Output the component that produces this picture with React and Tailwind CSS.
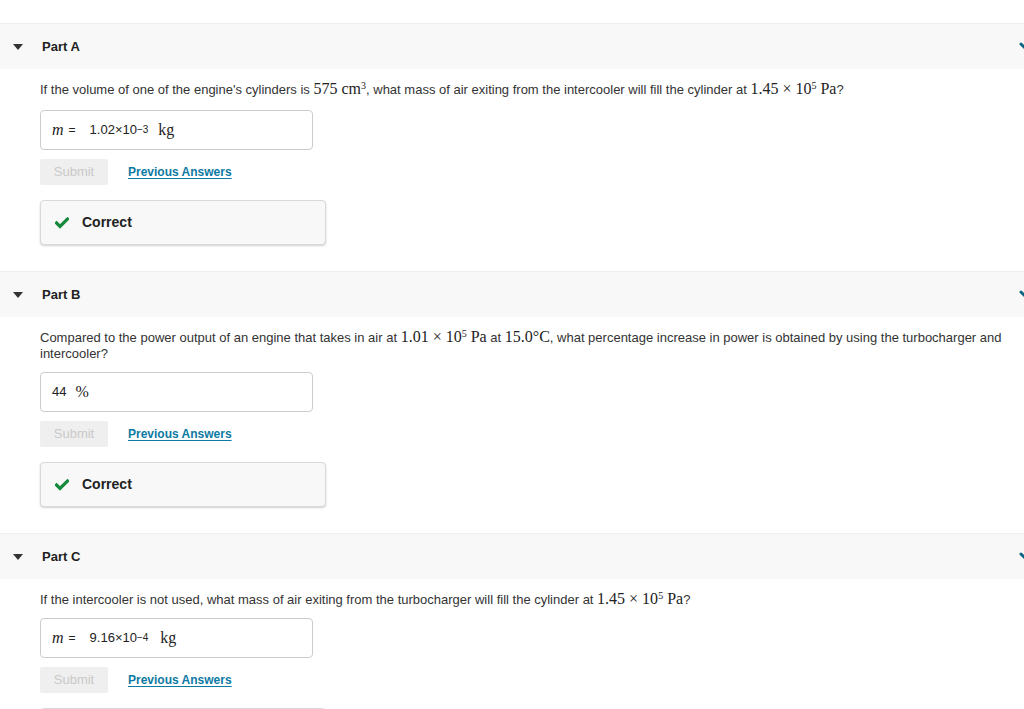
import React from "react";

const sans = { fontFamily: '"Liberation Sans", Arial, sans-serif' };
const serif = { fontFamily: '"Liberation Serif", "DejaVu Serif", serif' };

function Sup({ children }) {
  return <sup className="text-[10px] leading-[0]">{children}</sup>;
}

function M({ children }) {
  return (
    <span className="text-[16px] leading-[0] text-[#222]" style={serif}>
      {children}
    </span>
  );
}

function Header({ title }) {
  return (
    <div className="relative flex h-[46px] items-center bg-[#f8f8f8] border-t border-[#efefef]">
      <svg className="ml-[13px] h-[6px] w-[10px]" viewBox="0 0 10 6">
        <path d="M0 0 L10 0 L5 6 Z" fill="#333" />
      </svg>
      <span className="ml-[19px] text-[13px] font-bold text-[#222]">{title}</span>
      <svg
        className="absolute right-[-14px] top-[17px] h-[14px] w-[20px]"
        viewBox="0 0 20 14"
        fill="none"
      >
        <path d="M3 3 L10 10 L17 3" stroke="#0b6380" strokeWidth="3" strokeLinecap="round" />
      </svg>
    </div>
  );
}

function Check() {
  return (
    <svg className="h-[12px] w-[14px]" viewBox="0 0 14 12">
      <path d="M1.5 6 L5 9.5 L12.5 2" stroke="#158a3c" strokeWidth="3.2" fill="none" strokeLinecap="square" />
    </svg>
  );
}

function Controls() {
  return (
    <>
      <div className="mt-[9px] flex h-[26px] items-center">
        <div className="flex h-[26px] w-[68px] items-center justify-center rounded-[2px] bg-[#efefef] text-[13px] text-[#c9c9c9]">
          Submit
        </div>
        <span className="ml-[20px] text-[12px] leading-[14px] font-bold text-[#0c7aa3] underline decoration-[#0c7aa3] underline-offset-2">
          Previous Answers
        </span>
      </div>
      <div className="mt-[15px] flex h-[45px] w-[286px] items-center rounded-[4px] border border-[#d9d9d9] bg-[#f8f8f8] shadow-[0_1px_2px_rgba(0,0,0,0.18)]">
        <span className="ml-[14px] flex"><Check /></span>
        <span className="ml-[13px] text-[14px] font-bold text-[#222]">Correct</span>
      </div>
    </>
  );
}

function InputBox({ children, tight }) {
  return (
    <div
      className={
        (tight ? "mt-[10px] " : "mt-[12px] ") +
        "flex h-[40px] w-[273px] items-center rounded-[4px] border border-[#cccccc] bg-white pl-[11px]"
      }
    >
      {children}
    </div>
  );
}

function Part({ title, question, input, tight }) {
  return (
    <div>
      <Header title={title} />
      <div className="pl-[40px] pr-[10px] pt-[13px] pb-[26px]">
        <p className="text-[13px] leading-[16px] text-[#333]">{question}</p>
        <InputBox tight={tight}>{input}</InputBox>
        <Controls />
      </div>
    </div>
  );
}

function Sci({ mant, exp }) {
  return (
    <span className="text-[13px] text-[#222]">
      {mant}×10<sup className="relative top-[-1px] text-[10px]">{exp}</sup>
    </span>
  );
}

function MEq() {
  return (
    <span className="mr-[14px] flex items-center text-[#222]" style={serif}>
      <i className="text-[16px]">m</i>
      <span className="ml-[5px] text-[12px]" style={sans}>=</span>
    </span>
  );
}

export default function App() {
  return (
    <div className="h-[709px] w-full overflow-hidden bg-white pt-[23px]" style={sans}>
      <Part
        title="Part A"
        question={
          <>
            If the volume of one of the engine's cylinders is <M>575 cm<Sup>3</Sup></M>, what mass of air exiting from the intercooler will fill the cylinder at <M>1.45 × 10<Sup>5</Sup> Pa</M>?
          </>
        }
        input={
          <>
            <MEq />
            <Sci mant="1.02" exp="−3" />
            <span className="ml-[10px] text-[16px] text-[#222]" style={serif}>kg</span>
          </>
        }
      />
      <Part
        title="Part B"
        tight
        question={
          <>
            Compared to the power output of an engine that takes in air at <M>1.01 × 10<Sup>5</Sup> Pa</M> at <M>15.0°C</M>, what percentage increase in power is obtained by using the turbocharger and intercooler?
          </>
        }
        input={
          <>
            <span className="text-[13px] text-[#222]">44</span>
            <span className="ml-[9px] text-[16px] text-[#222]" style={serif}>%</span>
          </>
        }
      />
      <Part
        title="Part C"
        tight
        question={
          <>
            If the intercooler is not used, what mass of air exiting from the turbocharger will fill the cylinder at <M>1.45 × 10<Sup>5</Sup> Pa</M>?
          </>
        }
        input={
          <>
            <MEq />
            <Sci mant="9.16" exp="−4" />
            <span className="ml-[12px] text-[16px] text-[#222]" style={serif}>kg</span>
          </>
        }
      />
    </div>
  );
}
